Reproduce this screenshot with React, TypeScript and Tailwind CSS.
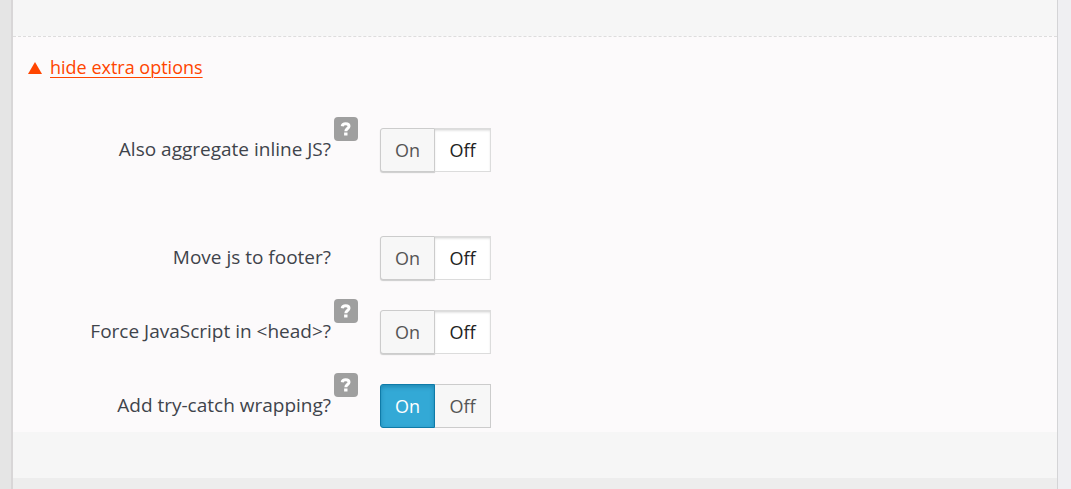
import React, { useState } from 'react'

type Option = {
  id: string;
  label: string;
  help?: string;
  on: boolean;
}

const initialOptions: Option[] = [
  { id: 'inline', label: 'Also aggregate inline JS?', help: 'Aggregate inline JS', on: false },
  { id: 'footer', label: 'Move js to footer?', on: false },
  { id: 'head', label: 'Force JavaScript in <head>?', help: 'Force JavaScript in head', on: false },
  { id: 'trycatch', label: 'Add try-catch wrapping?', help: 'Try-catch wrapping', on: true },
];

// segment looks: pressed "On" is blue, pressed "Off" is white
const onPressed = 'border-[#0f7ba8] bg-[#33a9d6] text-white shadow-[inset_0_2px_4px_rgba(0,90,130,0.4)]';
const onIdle = 'border-[#cccccc] bg-[#f7f7f7] text-[#555555] shadow-[0_1px_1px_#cccccc]';
const offPressed = 'border-[#dcdcdc] bg-white text-[#222222] shadow-[inset_0_2px_3px_-1px_rgba(0,0,0,0.2)]';
const offIdle = 'border-[#cccccc] bg-[#f7f7f7] text-[#555555]';

const Toggle = ({ option, onChange }: { option: Option; onChange: (on: boolean) => void }) => {
  return (
    <div role="group" aria-labelledby={option.id} className="flex h-11 text-lg">
      <button
        type="button"
        aria-pressed={option.on}
        onClick={() => onChange(true)}
        className={`w-[55px] rounded-l-[3px] border ${option.on ? onPressed : onIdle}`}
      >
        On
      </button>
      <button
        type="button"
        aria-pressed={!option.on}
        onClick={() => onChange(false)}
        className={`w-14 border border-l-0 ${option.on ? offIdle : offPressed}`}
      >
        Off
      </button>
    </div>
  );
}

const HelpButton = ({ text }: { text: string }) => {
  return (
    <button type="button" aria-label={text} className="h-6 w-6 rounded bg-[#9f9f9f]">
      <svg viewBox="0 0 24 24" className="h-6 w-6" fill="none" stroke="#fff" strokeWidth="3">
        <path d="M8.2 9.2C8.5 7.3 10 6.7 11.7 6.7c2.1 0 3.3 1 3.3 2.5 0 2.4-3.2 2.2-3.2 5.1" />
        <path d="M10.1 17h3.4" />
      </svg>
    </button>
  );
}

const App = () => {
  const [options, setOptions] = useState<Option[]>(initialOptions);
  const [visible, setVisible] = useState(true);

  const setOption = (id: string, on: boolean) => {
    setOptions(options.map((option) => (option.id === id ? { ...option, on } : option)));
  };

  return (
    <div className="flex min-h-screen bg-[#e5e5e5] font-['Open_Sans','Noto_Sans',sans-serif]">
      <div className="ml-[11px] flex flex-1 flex-col border-l-2 border-r border-l-[#d8d6d7] border-r-[#d4d4d6] bg-[#ededed]">
        <div className="h-9 bg-[#f6f6f6]" />

        <div className="border-t border-dashed border-[#dddddd] bg-[#fcfafb] pt-4 pb-1">
          <div className="flex items-center gap-2 pl-[15px] text-[#ff4500]">
            <svg viewBox="0 0 14 12" className="h-3 w-[14px]" fill="currentColor">
              <path d="M7 0l7 12H0z" />
            </svg>
            <a
              href="#options"
              className="pb-px text-lg leading-7 underline decoration-1 underline-offset-3"
              onClick={(e) => {
                e.preventDefault();
                setVisible(!visible);
              }}
            >
              {visible ? 'hide extra options' : 'show extra options'}
            </a>
          </div>

          {visible && (
            <div id="options" className="mt-[46px] flex flex-col gap-[30px]">
              {options.map((option) => (
                <div key={option.id} className="flex items-center gap-[22px] first:mb-[34px]">
                  <div className="flex w-[345px] items-center justify-end gap-[3px]">
                    <span id={option.id} className="pb-0.5 text-[19px] leading-7 text-[#3f444b]">
                      {option.label}
                    </span>
                    <div className="h-11 w-6">
                      {option.help && (
                        <div className="-mt-[11px]">
                          <HelpButton text={option.help} />
                        </div>
                      )}
                    </div>
                  </div>
                  <Toggle option={option} onChange={(on) => setOption(option.id, on)} />
                </div>
              ))}
            </div>
          )}
        </div>

        <div className="h-[46px] bg-[#f6f6f6]" />
      </div>
      <div className="w-[13px] bg-[#efeff2]" />
    </div>
  );
}

export default App
